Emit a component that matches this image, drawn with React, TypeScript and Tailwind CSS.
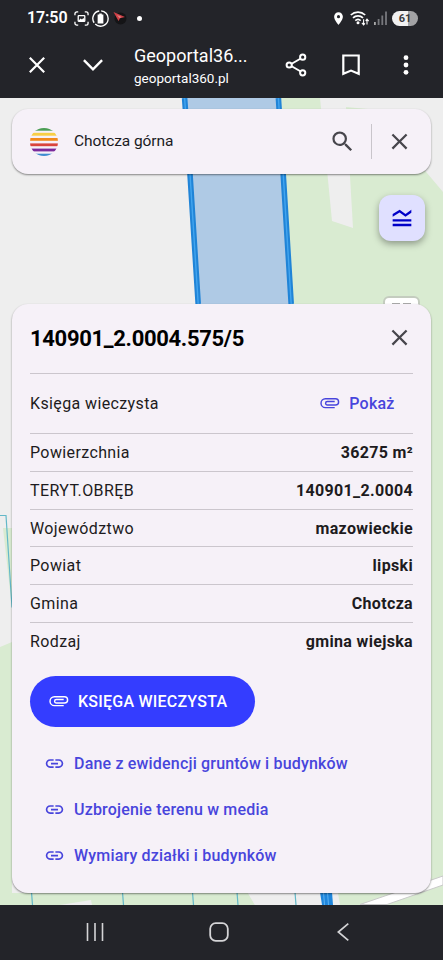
import type { ReactNode } from "react";
import { MdClose, MdLink, MdLocationOn, MdSearch } from "react-icons/md";

const rows = [
  { label: "Powierzchnia", value: "36275 m²" },
  { label: "TERYT.OBRĘB", value: "140901_2.0004" },
  { label: "Województwo", value: "mazowieckie" },
  { label: "Powiat", value: "lipski" },
  { label: "Gmina", value: "Chotcza" },
  { label: "Rodzaj", value: "gmina wiejska" },
];

const links = [
  "Dane z ewidencji gruntów i budynków",
  "Uzbrojenie terenu w media",
  "Wymiary działki i budynków",
];

const AttachmentIcon = () => (
  <svg viewBox="0.8 0.8 24 24" className="size-[23px] shrink-0" fill="none" stroke="currentColor" strokeWidth="1.5">
    <path d="M17.2 17.1H7.5a4.6 4.6 0 0 1 0-9.2H18a3.25 3.25 0 0 1 0 6.5H9.5a1.8 1.8 0 0 1 0-3.6h7.7" />
  </svg>
);

const StatusBar = () => (
  <div className="flex h-9 items-center pl-[27px] pr-[25px]">
    <span className="w-[40px] text-[16px] font-semibold tracking-[-0.1px] whitespace-nowrap">17:50</span>
    <svg viewBox="0 0 16 16" className="ml-[7px] size-[15px]" fill="none" stroke="currentColor" strokeWidth="1.4">
      <path d="M1 4.5V3a2 2 0 0 1 2-2h1.5M11.5 1H13a2 2 0 0 1 2 2v1.5M15 11.5V13a2 2 0 0 1-2 2h-1.5M4.5 15H3a2 2 0 0 1-2-2v-1.5" />
      <rect x="4.5" y="5" width="7" height="6" rx="0.6" />
      <path d="M5 10l2-2 1.5 1L10 7.5l1.2 1.500v2H5z" fill="currentColor" stroke="none" />
    </svg>
    <svg viewBox="0 0 16 16" className="ml-[3px] size-[17px]" fill="none" stroke="currentColor" strokeWidth="1.3">
      <path d="M6.800 .9A7.200 7.200 0 0 0 2 12M3 13.200A7.200 7.200 0 0 0 15.200 8 7.200 7.200 0 0 0 8.600.8" />
      <path d="M5.300 4.300h1.500v-1h2.400v1h1.500v8.400H5.300z" fill="currentColor" stroke="none" />
    </svg>
    <svg viewBox="0 0 14 14" className="ml-[4px] size-[14px]">
      <circle cx="7.5" cy="7.5" r="6" fill="#141416" />
      <path d="M.5 1l11.5 5-5 1.3L5.500 10z" fill="#cf4047" />
      <path d="M4 4l4.500 2-2 1z" fill="#e08a8a" />
    </svg>
    <span className="ml-[10px] size-[5px] rounded-full bg-white" />
    <div className="ml-auto flex items-center">
      <MdLocationOn className="size-[15px]" />
      <svg viewBox="0 0 20 16" className="ml-[4px] h-4 w-5" fill="none" stroke="currentColor" strokeWidth="1.7">
        <path d="M.8 5a10.5 10.5 0 0 1 14.4 0M3 7.800a7.200 7.200 0 0 1 10 0M5.300 10.600a4 4 0 0 1 5.400 0" />
        <circle cx="8" cy="12.8" r="1.5" fill="currentColor" stroke="none" />
        <path d="M13.600 9.300v5.500m-1.700-1.900 1.700 1.900 1.300-1.500M17 14.500V9.200m-1.300 1.700L17 9.200l1.700 1.900" strokeWidth="1.1" />
      </svg>
      <svg viewBox="0 0 13 14" className="ml-[4px] h-[14px] w-[13px]" fill="#77787d">
        <rect y="11" width="1.8" height="3" fill="#aaa" />
        <rect x="3.7" y="8" width="1.8" height="6" />
        <rect x="7.4" y="4.5" width="1.8" height="9.5" />
        <rect x="11.1" y="0.5" width="1.8" height="13.5" />
      </svg>
      <span className="ml-[5px] flex h-[15px] w-[26px] items-center justify-center rounded-full bg-linear-to-r from-[#f1f1f1] from-61% to-[#a2a2a4] to-61% text-[11px] leading-none font-bold text-[#3a3a3d]">
        61
      </span>
    </div>
  </div>
);

const BrowserBar = () => (
  <div className="flex h-[62px] items-center pr-[34px] pl-[29px]">
    <svg viewBox="0 0 16 16" className="mt-[-4px] size-4" stroke="currentColor" strokeWidth="2.2">
      <path d="M.8.8l14.4 14.4M15.2.8.8 15.2" />
    </svg>
    <svg viewBox="0 0 20 12" className="mt-[-4px] ml-[38px] h-3 w-5" fill="none" stroke="currentColor" strokeWidth="2.4">
      <path d="M.9 1.2 10 10.3l9.1-9.1" />
    </svg>
    <div className="-mt-1 ml-[31px] w-[115px] pt-[3px]">
      <p className="text-[18px] leading-[22px] whitespace-nowrap">Geoportal36...</p>
      <p className="mt-px text-[13.5px] leading-[20px] whitespace-nowrap">geoportal360.pl</p>
    </div>
    <svg viewBox="0 0 22 24" className="mt-[-4px] ml-[36px] h-6 w-[22px] shrink-0" fill="none" stroke="currentColor" strokeWidth="2">
      <path d="M4.5 12 17.5 4.5M4.5 12l13 7.5" />
      <circle cx="4.2" cy="12" r="2.6" fill="#232429" />
      <circle cx="17.7" cy="4.2" r="2.6" fill="#232429" />
      <circle cx="17.7" cy="19.8" r="2.6" fill="#232429" />
    </svg>
    <svg viewBox="0 0 18 22" className="mt-[-4px] ml-[35px] h-[22px] w-[18px] shrink-0" fill="none" stroke="currentColor" strokeWidth="2.2">
      <path d="M1.3 1.5h15.4v18.3L9 16.6l-7.7 3.2z" />
    </svg>
    <svg viewBox="0 0 6 20" className="mt-[-4px] ml-auto h-5 w-[6px] shrink-0" fill="currentColor">
      <circle cx="3" cy="2.7" r="2.4" />
      <circle cx="3" cy="10" r="2.4" />
      <circle cx="3" cy="17.3" r="2.4" />
    </svg>
  </div>
);

const MapCanvas = () => (
  <svg viewBox="0 98 443 807" className="absolute inset-0 h-full w-full">
    <rect y="98" width="443" height="807" fill="#eee" />
    <path d="M278 98h42l12 123 21 7-7-121 22 2 59 64 16 19v713H291V304z" fill="#d9ebd1" />
    <path d="M3 528h9v80zM0 647l12-5v251h236l7 12H0z" fill="#d9ebd1" />
    <path d="M60 905l31-5 1 5z" fill="#eee" />
    <path d="M248 893h90l2 12h-85z" fill="#eee" />
    <path d="M360 904.5 443 876v9l-56 19.5z" fill="#fff" stroke="#c9c9c9" />
    <path d="M184.6 98 190 174l8.2 130h93L283.2 174l-4.8-76z" fill="#afcae5" />
    <path d="M184.6 98 190 174l8.2 130M278.4 98l4.8 76 8 130" fill="none" stroke="#2084d7" strokeWidth="5.6" />
    <path d="M184.6 98 190 174l8.2 130M278.4 98l4.8 76 8 130" fill="none" stroke="#42a5ef" strokeWidth="1.4" />
    <path d="M0 515.5h6l6 92M31.5 892l1 13M122.5 892l1 13M192.5 892l1 13M237 892l1 13M295 892l1 13" fill="none" stroke="#63b8c8" strokeWidth="1.2" />
    <path d="M320 892h12l1 13h-11z" fill="#1f86dc" />
    <path d="M323.5 892l1 13M327.5 892l1 13" stroke="#5cb2f2" strokeWidth="1" />
  </svg>
);

const SearchCard = () => (
  <div className="relative flex h-[65px] items-center rounded-2xl bg-[#f6f1f8] px-[18px] shadow-[0_1px_2px_rgba(0,0,0,0.45)]">
    <svg viewBox="0 0 28 28" className="size-7 overflow-hidden rounded-full">
      <rect width="28" height="2.7" fill="#4b9d54" />
      <rect y="4.8" width="28" height="2.9" fill="#f8cf45" />
      <rect y="10" width="28" height="2.8" fill="#f18a1c" />
      <rect y="15.4" width="28" height="2.8" fill="#d9453d" />
      <rect y="20.6" width="28" height="2.8" fill="#7b2a9b" />
      <rect y="25.7" width="28" height="2.3" fill="#3f8cd0" />
    </svg>
    <span className="ml-4 text-[15.5px] tracking-[-0.08px] text-[#1b1b1f]">Chotcza górna</span>
    <MdSearch className="mt-[-1px] ml-auto size-[27px] text-[#47464c]" />
    <span className="ml-[15px] h-[35px] w-px bg-[#c9c5cb]" />
    <MdClose className="mt-[-1px] ml-[14px] size-[27px] text-[#47464c]" />
  </div>
);

const Row = ({ label, children }: { label: string; children: ReactNode }) => (
  <div className="flex h-[37.7px] items-center justify-between border-b border-[#cbc6cd] pt-px last:border-0">
    <span className="tracking-[0.38px]">{label}</span>
    {children}
  </div>
);

const ParcelPanel = () => (
  <section className="relative mt-[130px] h-[589px] rounded-2xl bg-[#f6f1f8] px-[18px] text-[16px] text-[#1d1b20] shadow-[0_1px_2px_rgba(0,0,0,0.45)]">
    <header className="flex h-[70px] items-center justify-between border-b border-[#cbc6cd]">
      <h1 className="text-[22px] font-bold tracking-[-0.32px] text-black">140901_2.0004.575/5</h1>
      <MdClose className="mt-[-3px] size-[27px] text-[#47464c]" />
    </header>
    <div className="flex h-[60.3px] items-center justify-between border-b border-[#cbc6cd]">
      <span className="tracking-[0.38px]">Księga wieczysta</span>
      <a className="mr-[18.5px] flex items-center gap-[7px] font-medium tracking-[0.2px] text-[#4845dc]">
        <AttachmentIcon />
        Pokaż
      </a>
    </div>
    <div>
      {rows.map((row) => (
        <Row key={row.label} label={row.label}>
          <span className="font-bold tracking-[0.33px]">{row.value}</span>
        </Row>
      ))}
    </div>
    <button className="mt-[15.5px] flex h-[51px] w-[225px] items-center gap-[7px] rounded-full bg-[#343dff] pt-px pl-[18px] font-medium tracking-[0.23px] whitespace-nowrap text-white">
      <AttachmentIcon />
      KSIĘGA WIECZYSTA
    </button>
    <nav className="mt-[13.5px] flex flex-col pl-[14px]">
      {links.map((link) => (
        <a key={link} className="flex h-[46.2px] items-center gap-[9px] font-medium tracking-[0.18px] whitespace-nowrap text-[#4845dc]">
          <MdLink className="size-[21px]" />
          {link}
        </a>
      ))}
    </nav>
  </section>
);

const NavigationBar = () => (
  <footer className="flex h-[55px] items-center bg-[#232429] pr-[94px] pb-[2px] pl-[86px] text-[#d4d4d6]">
    <svg viewBox="0 0 18 18" className="size-[18px]" stroke="currentColor" strokeWidth="1.6">
      <path d="M1.5 0v18M9 0v18M16.5 0v18" />
    </svg>
    <svg viewBox="0 0 20 20" className="ml-[105px] size-5" fill="none" stroke="currentColor" strokeWidth="1.8">
      <rect x="1.2" y="1.2" width="17.6" height="17.6" rx="5.5" />
    </svg>
    <svg viewBox="0 0 12 18" className="ml-auto h-[18px] w-3" fill="none" stroke="currentColor" strokeWidth="1.7">
      <path d="M11.3.7 1.3 9l10 8.3" />
    </svg>
  </footer>
);

export default function App() {
  return (
    <div className="flex h-[960px] w-[443px] flex-col overflow-hidden bg-[#232429] font-[Roboto,sans-serif]">
      <header className="h-[98px] text-white">
        <StatusBar />
        <BrowserBar />
      </header>
      <main className="relative h-[807px] overflow-hidden px-3 pt-[11px]">
        <MapCanvas />
        <SearchCard />
        <div className="absolute top-[198px] left-[383px] flex h-9 w-[37px] justify-center gap-[3px] rounded-md border-2 border-[#c4ccbf] bg-white pt-[5px]">
          <span className="h-1 w-2 bg-[#aaa]" />
          <span className="h-1 w-2 bg-[#aaa]" />
        </div>
        <button className="absolute top-[97px] left-[379px] flex size-[46px] items-center justify-center rounded-xl bg-[#e0e0ff] text-[#0000c8] shadow-[0_3px_7px_rgba(0,0,0,0.35)]">
          <svg viewBox="0 0 24 24" className="size-7" fill="currentColor">
            <path d="M20 15H4v-2h16v2zm0 2H4v2h16v-2zM15 11l5-3.55V5l-5 3.55L10 5 4 8.66V11l5.92-3.61L15 11z" />
          </svg>
        </button>
        <ParcelPanel />
      </main>
      <NavigationBar />
    </div>
  );
}
